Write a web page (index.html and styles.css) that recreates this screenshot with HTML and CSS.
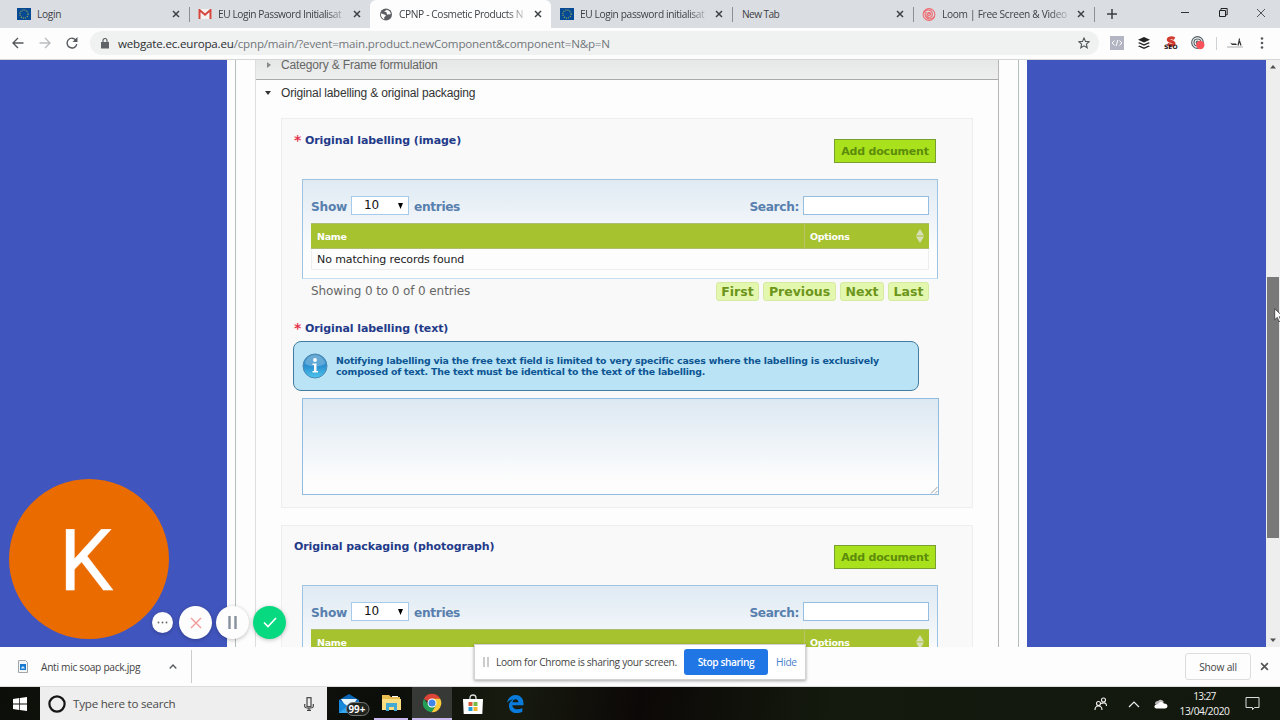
FILE: index.html
```html
<!DOCTYPE html>
<html lang="en">
<head>
<meta charset="utf-8">
<title>CPNP - Cosmetic Products Notification Portal</title>
<link rel="stylesheet" href="styles.css">
</head>
<body>
<svg class="defs" width="0" height="0">
  <defs>
    <symbol id="x" viewBox="0 0 8 8"><path d="M1 1l6 6M7 1l-6 6" fill="none" stroke="currentColor" stroke-width="1.5"/></symbol>
    <symbol id="eu" viewBox="0 0 14 12"><path fill="#064a94" d="M0 0h14v12H0z"/><circle cx="7" cy="6" r="4.1" fill="none" stroke="#b5b84c" stroke-width="1.1" stroke-dasharray="1 1.147"/></symbol>
    <symbol id="sort" viewBox="0 0 8 14"><path fill="#d7dfb9" d="M4 0l4 6.5H0zM0 7.5h8L4 14z"/></symbol>
    <linearGradient id="orb" x1="0" y1="0" x2="0" y2="1"><stop offset="0" stop-color="#4b94c7"/><stop offset=".5" stop-color="#2b8fcf"/><stop offset="1" stop-color="#4cc6ee"/></linearGradient>
  </defs>
</svg>

<header class="tabs">
  <div class="tab"><svg class="fav" width="14" height="12"><use href="#eu"/></svg><span class="tab-title">Login</span><svg class="close" width="8" height="8"><use href="#x"/></svg></div>
  <div class="tab flush"><svg class="fav" width="13" height="10" viewBox="0 0 13 10"><path fill="#f4f1f1" d="M0 0h13v10H0z"/><path d="M1 10V1l5.5 4.700L12 1v9" fill="none" stroke="#d5473d" stroke-width="2"/></svg><span class="tab-title fade t-gmail">EU Login Password Initialisat</span><svg class="close" width="8" height="8"><use href="#x"/></svg></div>
  <div class="tab active"><svg class="fav" width="13" height="13" viewBox="0 0 13 13"><circle cx="6.500" cy="6.500" r="6" fill="#5b5f63"/><path fill="#fff" d="M1.500 5.500c2 0 2.500 1 4 1.200s.5 1.800-.5 2.300.5 2-.5 2.200C2.500 10.500 1 8 1.500 5.500zM7 1.800c2 .2 4 1.700 4.300 4.200-1 .8-1.800 0-2.600.6S7 6 7.200 5 5 4.800 5 3.600s2-.6 2-1.800z"/></svg><span class="tab-title fade t-cpnp">CPNP - Cosmetic Products N</span><svg class="close" width="8" height="8"><use href="#x"/></svg></div>
  <div class="tab"><svg class="fav" width="14" height="12"><use href="#eu"/></svg><span class="tab-title fade t-eu">EU Login password initialisat</span><svg class="close" width="8" height="8"><use href="#x"/></svg></div>
  <div class="tab no-icon"><span class="tab-title">New Tab</span><svg class="close" width="8" height="8"><use href="#x"/></svg></div>
  <div class="tab"><svg class="fav" width="13" height="13" viewBox="0 0 13 13"><g fill="none" stroke="#ef6b70" stroke-width="1.100"><circle cx="6.500" cy="6.500" r="5.900"/><path d="M1 5c1-3 5-4 7.500-2S10 9 7.500 9.500 3.500 7 5 5.300 8.500 5 8.300 7M12 8c-1 3-5 4-7.500 2S2 5 4 4"/><circle cx="6.500" cy="6.500" r="1.200"/></g></svg><span class="tab-title fade t-loom">Loom | Free Screen &amp; Video</span><svg class="close" width="8" height="8"><use href="#x"/></svg></div>
  <svg class="plus" width="10" height="10" viewBox="0 0 10 10"><path d="M5 0v10M0 5h10" stroke="#3b3e41" stroke-width="1.500"/></svg>
  <div class="window-buttons">
    <svg width="10" height="10" viewBox="0 0 10 10"><path d="M1 4.500h8" stroke="#333"/></svg>
    <svg width="10" height="10" viewBox="0 0 10 10"><path d="M1.500 2.500h6v6h-6zM3 2.500v-2h6.200v6.300H8" fill="none" stroke="#222"/></svg>
    <svg width="10" height="10" viewBox="0 0 10 10"><path d="M1 1l8 8M9 1L1 9" stroke="#444" stroke-width=".9"/></svg>
  </div>
</header>

<nav class="toolbar">
  <svg class="nav-icon" width="12" height="12" viewBox="0 0 12 12"><path d="M11.500 6H1.500M6 1L1 6l5 5" fill="none" stroke="#55595d" stroke-width="1.400"/></svg>
  <svg class="nav-icon" width="12" height="12" viewBox="0 0 12 12"><path d="M.5 6h10M6 1l5 5-5 5" fill="none" stroke="#b9bcbf" stroke-width="1.400"/></svg>
  <svg class="nav-icon" width="12" height="12" viewBox="0 0 12 12"><path d="M10 3.200A4.900 4.900 0 1 0 10.800 7.200" fill="none" stroke="#55595d" stroke-width="1.400"/><path fill="#55595d" d="M11.500 0v5h-5z"/></svg>
  <div class="omnibox">
    <svg width="8" height="11" viewBox="0 0 8 11"><path fill="#5f6368" d="M0 4h8v6.500H0z"/><path d="M2 4V2.500a2 2 0 0 1 4 0V4" fill="none" stroke="#5f6368" stroke-width="1.200"/></svg>
    <span class="url"><b>webgate.ec.europa.eu</b>/cpnp/main/?event=main.product.newComponent&amp;component=N&amp;p=N</span>
    <svg class="star" width="12" height="12" viewBox="0 0 12 12"><path d="M6 1l1.500 3.400 3.700.3-2.800 2.500.8 3.600L6 8.900l-3.200 1.900.8-3.600L.8 4.700l3.700-.3z" fill="none" stroke="#54585c" stroke-width="1.100"/></svg>
  </div>
  <div class="extensions">
    <svg width="14" height="14" viewBox="0 0 14 14"><path fill="#b3b5c2" d="M0 0h14v14H0z"/><path d="M4.500 4.500L2.200 7l2.300 2.500M9.500 4.500L11.800 7 9.500 9.500M7.800 4L6.200 10" fill="none" stroke="#fff"/></svg>
    <svg width="14" height="14" viewBox="0 0 14 14"><path fill="#222" d="M7 1l6 2.800-6 2.800-6-2.800zM2.500 6.200L7 8.200l4.500-2 1.500.8-6 2.800L1 7zM2.500 9.400L7 11.400l4.500-2 1.500.8L7 13l-6-2.800z"/></svg>
    <svg width="14" height="14" viewBox="0 0 14 14"><path d="M10.500 2.800C8 1.200 4 1.700 4.300 3.800S10 5.200 10 7.500 6 9.500 3.500 8" fill="none" stroke="#d23c30" stroke-width="3"/><text x="0" y="13" class="seo">SEO</text></svg>
    <svg width="14" height="14" viewBox="0 0 14 14"><g fill="none" stroke="#566269" stroke-width="1.200"><circle cx="6.500" cy="6.500" r="5.800"/><circle cx="6.500" cy="6.500" r="3.500"/><circle cx="6.500" cy="6.500" r="1.300"/></g><circle cx="9.300" cy="9" r="4.200" fill="#f8525a"/></svg>
    <i class="divider"></i>
    <svg class="profile" width="16" height="12" viewBox="0 0 16 12"><path d="M3 5.500l2 1h4l1 1.500H5z" fill="#333"/><path d="M12.500 1.500l-.5 3-1 4M12.500 4l1.500 4.500" fill="none" stroke="#333" stroke-width="1.200"/><path d="M0 10h16" stroke="#999" stroke-width=".8"/></svg>
    <svg class="menu" width="4" height="12" viewBox="0 0 4 12"><g fill="#55595d"><circle cx="2" cy="1.500" r="1.300"/><circle cx="2" cy="6" r="1.300"/><circle cx="2" cy="10.500" r="1.300"/></g></svg>
  </div>
</nav>

<main class="viewport">
  <div class="page">
    <div class="frame">
      <div class="accordion">
        <h3 class="acc-head collapsed"><svg width="4" height="6" viewBox="0 0 4 6"><path d="M0 0l4 3-4 3z" fill="#888"/></svg><span>Category &amp; Frame formulation</span></h3>
        <h3 class="acc-head open"><svg width="6" height="4" viewBox="0 0 6 4"><path d="M0 0h6L3 4z" fill="#333"/></svg><span>Original labelling &amp; original packaging</span></h3>

        <section class="fieldset first">
          <div class="field-head"><h4><span class="req">*</span><span>Original labelling (image)</span></h4><button class="add">Add document</button></div>
          <div class="grid">
            <div class="grid-tools"><span class="show">Show</span><span class="select">10<svg width="5" height="6" viewBox="0 0 5 6"><path d="M0 0h5L2.500 6z"/></svg></span><span class="entries">entries</span><span class="search">Search:</span><span class="input"></span></div>
            <div class="thead"><span class="th-name">Name</span><span class="th-options">Options</span><svg width="8" height="14"><use href="#sort"/></svg></div>
            <div class="empty"><span>No matching records found</span></div>
          </div>
          <div class="pager"><span class="showing">Showing 0 to 0 of 0 entries</span><a class="p-first">First</a><a class="p-prev">Previous</a><a class="p-next">Next</a><a class="p-last">Last</a></div>
          <h4 class="text-label"><span class="req">*</span><span>Original labelling (text)</span></h4>
          <div class="info">
            <svg width="26" height="26" viewBox="0 0 26 26"><circle cx="13" cy="13" r="12" fill="url(#orb)" stroke="#4c89b4"/><path d="M3 11a10 9 0 0 1 20 0q-10 5-20 0z" fill="#fff" opacity=".22"/><circle cx="13" cy="7" r="1.900" fill="#fff"/><path d="M10.500 10.500h4V18H16v1.500h-5.500V18H12v-6h-1.500z" fill="#fff"/></svg>
            <p><span class="i1">Notifying labelling via the free text field is limited to very specific cases where the labelling is exclusively</span><br><span class="i2">composed of text. The text must be identical to the text of the labelling.</span></p>
          </div>
          <div class="textarea"><svg width="8" height="8" viewBox="0 0 8 8"><path d="M1 7.500L7.500 1M5 7.500L7.500 5" stroke="#888" stroke-width=".8"/></svg></div>
        </section>

        <section class="fieldset second">
          <div class="field-head"><h4><span>Original packaging (photograph)</span></h4><button class="add">Add document</button></div>
          <div class="grid">
            <div class="grid-tools"><span class="show">Show</span><span class="select">10<svg width="5" height="6" viewBox="0 0 5 6"><path d="M0 0h5L2.500 6z"/></svg></span><span class="entries">entries</span><span class="search">Search:</span><span class="input"></span></div>
            <div class="thead"><span class="th-name">Name</span><span class="th-options">Options</span><svg width="8" height="14"><use href="#sort"/></svg></div>
          </div>
        </section>
      </div>
    </div>
  </div>
  <div class="scrollbar">
    <svg width="6" height="4" viewBox="0 0 6 4"><path d="M0 3.500h6L3 0z" fill="#505050"/></svg>
    <div class="thumb"></div>
    <svg width="6" height="4" viewBox="0 0 6 4"><path d="M0 .5h6L3 4z" fill="#505050"/></svg>
  </div>
</main>

<div class="downloads">
  <svg class="file" width="10" height="13" viewBox="0 0 10 13"><path d="M.5.5h7l2 2v10h-9z" fill="#f3f6f8" stroke="#a2a6aa"/><path fill="#1779cf" d="M2 4h6v6H2z"/><path fill="#cfeaff" d="M3 8l2-2 2 2.500H3z"/></svg>
  <span class="filename">Anti mic soap pack.jpg</span>
  <svg class="caret" width="8" height="5" viewBox="0 0 8 5"><path d="M.7 4.500L4 1l3.300 3.500" fill="none" stroke="#55595d" stroke-width="1.300"/></svg>
  <span class="show-all"><span>Show all</span></span>
  <svg class="dl-close" width="9" height="9" viewBox="0 0 8 8"><use href="#x"/></svg>
</div>

<footer class="taskbar">
  <div class="start"><svg width="14" height="14" viewBox="0 0 14 14"><path fill="#fff" d="M0 2l6.300-.9v5.500H0zM7 1l7-1v6.600H7zM0 7.400h6.300v5.500L0 12zM7 7.400h7V14l-7-1z"/></svg></div>
  <div class="search-box">
    <svg width="18" height="18" viewBox="0 0 18 18"><circle cx="9" cy="9" r="7.600" fill="none" stroke="#151515" stroke-width="2.200"/></svg>
    <span>Type here to search</span>
    <svg class="mic" width="10" height="14" viewBox="0 0 10 14"><rect x="3" y=".7" width="4" height="9" fill="none" stroke="#444" stroke-width="1.200"/><path d="M.7 7v2.500Q1 11 3 11h4q2 0 2.300-1.500V7M5 11v2.500M3 13.300h4" fill="none" stroke="#444" stroke-width="1.200"/></svg>
  </div>
  <div class="app mail"><svg width="32" height="24" viewBox="0 0 32 24"><path fill="#0b66b6" d="M1 8l10-6 10 6v13H1z"/><path fill="#e7f5fd" d="M3 7h16l-5 8H8z"/><path fill="#1689dc" d="M1 8l10 7 10-7v13H1z"/><path fill="#35a5ec" d="M1 21l10-8 10 8z"/><rect x="8.500" y="10.500" width="22.500" height="13" rx="6.500" fill="#20241f" stroke="#777"/><text x="10.500" y="20.500" class="badge">99+</text></svg></div>
  <div class="app explorer"><svg width="19" height="17" viewBox="0 0 19 17"><path fill="#e8bd50" d="M0 1h7l2 2h9v4H0z"/><path fill="#fbdd84" d="M0 5h19v11H0z"/><path fill="#fff" d="M10 2h6v1h-6z"/><path fill="#43aad5" d="M4 9h11v8h-3v-4H7v4H4z"/></svg></div>
  <div class="app chrome"><svg width="20" height="20" viewBox="-10 -10 20 20"><path fill="#dc4437" d="M0 0L-8.200-4A9.200 9.200 0 0 1 8.200-4.200z"/><path fill="#f8cb3c" d="M0-4.300h8.200A9.200 9.200 0 0 1-.5 9.200L4 2z"/><path fill="#239e56" d="M-8.100-4.300A9.200 9.200 0 0 0-.5 9.200L4 2-3.800 2z"/><circle r="4.500" fill="#fff"/><circle r="3.500" fill="#4285e8"/></svg></div>
  <div class="app store"><svg width="20" height="20" viewBox="0 0 20 20"><path d="M7 6V4q0-3 3-3t3 3v2" fill="none" stroke="#ddd" stroke-width="1.300"/><path fill="#fff" d="M0 5h20l-.7 15H.7z"/><path fill="#dc5937" d="M5.500 8h4v4h-4z"/><path fill="#78b943" d="M10.500 8h4v4h-4z"/><path fill="#20a1dc" d="M5.500 13h4v4h-4z"/><path fill="#f1b52f" d="M10.500 13h4v4h-4z"/></svg></div>
  <div class="app edge"><svg width="17" height="18" viewBox="0 0 17 18"><path fill="#087bdc" d="M0 8C1 2.500 4.500 0 8.500 0 14 0 17 4 16.500 10.200H5.300c.2 4.300 6 5.300 10 2.800v3.700C8.500 20 1.500 17 2 10.200c.2-2.700 1.800-4.700 4.200-5.700C3 4.700 1 6.200 0 8zm5.500-.8h5.900C11.300 3.300 6 3.300 5.500 7.200z"/></svg></div>
  <div class="tray">
    <svg class="people" width="14" height="14" viewBox="0 0 14 14"><g fill="none" stroke="#f2f2f2" stroke-width="1.100"><circle cx="4.500" cy="6.500" r="2"/><path d="M1 13q0-4 3.500-4T8 13"/><circle cx="9.500" cy="3" r="2"/><path d="M7 6.500q5.500-2 5.500 2.500"/></g></svg>
    <svg class="up" width="12" height="8" viewBox="0 0 12 8"><path d="M1 7l5-5 5 5" fill="none" stroke="#eee" stroke-width="1.200"/></svg>
    <svg class="cloud" width="14" height="10" viewBox="0 0 14 10"><path fill="#bbb" d="M1 5q0-3 3-3Q7-1 10 3l-4 3z"/><path fill="#fff" d="M2.500 9.500Q0 9 .5 7T4 5q3-4 6-.5 3.500 0 3.500 3-.5 2-2.500 2z"/></svg>
    <div class="clock"><span class="time">13:27</span><span class="date">13/04/2020</span></div>
    <svg class="notify" width="15" height="15" viewBox="0 0 15 15"><path d="M1 1.500h13v10H9.500l-2 2.200v-2.200H1z" fill="none" stroke="#ddd"/></svg>
  </div>
</footer>

<div class="avatar"><span>K</span></div>
<div class="recorder">
  <span class="bubble small"><svg width="11" height="3" viewBox="0 0 11 3"><g fill="#666"><circle cx="1.500" cy="1.500" r=".9"/><circle cx="5.500" cy="1.500" r=".9"/><circle cx="9.500" cy="1.500" r=".9"/></g></svg></span>
  <span class="bubble"><svg width="12" height="12" viewBox="0 0 12 12"><path d="M1 1l10 10M11 1L1 11" stroke="#f19a99" stroke-width="1.400"/></svg></span>
  <span class="bubble"><svg width="9" height="13" viewBox="0 0 9 13"><path d="M1.500 0v13M7.500 0v13" stroke="#87909f" stroke-width="2.400"/></svg></span>
  <span class="bubble done"><svg width="14" height="11" viewBox="0 0 14 11"><path d="M1 5.500L5 9.500 13 1" fill="none" stroke="#fff" stroke-width="1.700"/></svg></span>
</div>
<div class="share"><i class="grip"></i><span class="share-text">Loom for Chrome is sharing your screen.</span><button class="stop"><span>Stop sharing</span></button><a class="hide">Hide</a></div>
<svg class="cursor" width="10" height="15" viewBox="0 0 10 15"><path d="M.7.700v11l2.600-2.300 1.800 4.200 2-.9-1.800-4h3.800z" fill="#fff" stroke="#333" stroke-width=".8"/></svg>
</body>
</html>
```
FILE: styles.css
```css
* { box-sizing: border-box; }
body { margin: 0; width: 1280px; height: 720px; overflow: hidden; position: relative; display: flex; flex-direction: column; font-family: "DejaVu Sans", sans-serif; background: #fdfdfd; }
svg { flex: none; display: block; }
span, a { white-space: nowrap; }
h3, h4, p { margin: 0; }
button { border: 0; padding: 0; font: inherit; }
.defs { position: absolute; }

.tabs { height: 28px; flex: none; background: #dadde2; display: flex; align-items: center; padding-left: 8px; color: #3f4246; font-family: "Open Sans", sans-serif; font-size: 10.200px; letter-spacing: -.3px; }
.tab { width: 181px; height: 28px; display: flex; align-items: center; padding: 0 9px; position: relative; }
.tab:not(.active)::after { content: ""; position: absolute; right: -1px; top: 7px; width: 1px; height: 15px; background: #8c9095; }
.tab.flush::after { display: none; }
.tab.active { background: #fdfdfd; border-radius: 6px 6px 0 0; }
.fav { width: 14px; margin-right: 6px; }
.tab-title { width: 128px; }
.fade { -webkit-mask-image: linear-gradient(90deg, #000 108px, rgba(0,0,0,.15) 127px); mask-image: linear-gradient(90deg, #000 108px, rgba(0,0,0,.15) 127px); }
.t-gmail { letter-spacing: -.43px; }
.t-cpnp { letter-spacing: -.37px; }
.t-eu { letter-spacing: -.38px; }
.t-loom { letter-spacing: -.32px; }
.no-icon .tab-title { width: 147px; margin-left: 1px; letter-spacing: -.6px; }
.close { margin-left: 7px; color: #3e4144; }
.plus { margin-left: 13px; }
.window-buttons { margin-left: auto; display: flex; gap: 28px; padding-right: 14px; margin-top: -3px; }

.toolbar { height: 32px; flex: none; background: #fdfdfd; border-bottom: 1px solid #d4d6d8; display: flex; align-items: center; padding: 0 16px 1px 12px; }
.nav-icon { margin-right: 15px; }
.nav-icon:nth-child(3) { margin-right: 12px; }
.omnibox { width: 1009px; height: 24px; border-radius: 12px; background: #f0f2f2; display: flex; align-items: center; padding: 0 9px 0 11px; }
.url { margin-left: 9px; font: 11.600px "Open Sans", sans-serif; color: #72767a; letter-spacing: -.2px; }
.url b { font-weight: 400; color: #2b2e31; }
.star { margin-left: auto; }
.extensions { display: flex; align-items: center; margin-left: 11px; gap: 13px; }
.seo { font: bold 6px "DejaVu Sans", sans-serif; fill: #221010; }
.divider { width: 1px; height: 13px; background: #cfd2d5; margin: 0 -3px 0 -2px; }
.profile { margin-right: 4px; }

.viewport { height: 587px; flex: none; display: flex; background: #4155be; overflow: hidden; padding-left: 227px; justify-content: space-between; }
.page { width: 800px; background: #fdfdfd; padding: 0 8px; }
.frame { width: 784px; height: 587px; border: solid #b4bebb; border-width: 0 1px; padding: 0 19px; }
.accordion { width: 744px; height: 587px; border: 1px solid #b5b5b5; border-left-color: #dedede; border-width: 0 1px; overflow: hidden; }
.acc-head { font: 12px "Liberation Sans", sans-serif; letter-spacing: -.15px; display: flex; align-items: center; }
.collapsed { height: 20px; background: linear-gradient(#e6e8e8, #eeeeee); border-bottom: 1px solid #aaa; color: #666; padding: 0 0 10px 11px; }
.acc-head span { margin-left: 10px; }
.open { height: 27px; color: #333; padding: 0 0 1px 9px; }
.fieldset { width: 692px; margin-left: 25px; background: #f9f9f9; border: 1px solid #eee; }
.first { height: 390px; margin-top: 11px; }
.second { height: 160px; margin-top: 17px; }
.field-head { height: 60px; display: flex; justify-content: space-between; padding: 20px 36px 0 12px; }
.second .field-head { height: 59px; padding-top: 19px; }
h4 { font-size: 11px; line-height: 15px; letter-spacing: -.09px; color: #233a89; display: flex; height: 15px; }
.field-head h4 { margin-top: -6px; }
.req { width: 11px; color: #e8364f; font-size: 14px; line-height: 15px; font-weight: bold; margin-left: 0; }
.add { width: 102px; height: 24px; background: #aae11d; border: 1px solid #789f32; color: #5c8c0b; font-weight: bold; font-size: 11px; letter-spacing: -.18px; text-align: center; }
.grid { width: 636px; height: 100px; margin-left: 20px; border: 1px solid #9ec2e2; border-bottom-color: #c7def0; background: linear-gradient(#dfeaf3, #fdfdfd 75%); padding: 16px 8px 0; }
.grid-tools { height: 19px; display: flex; align-items: center; color: #587fae; font-size: 12.200px; letter-spacing: -.35px; font-weight: bold; margin-bottom: 8px; }
.show, .entries, .search { padding-top: 2px; }
.show { width: 40px; letter-spacing: -.25px; }
.select { width: 58px; height: 19px; border: 1px solid #a6cbea; background: #fff; color: #111; font-weight: 400; font-size: 12px; letter-spacing: -.1px; line-height: 19px; display: flex; align-items: center; padding-left: 12px; }
.select svg { margin-left: auto; margin-right: 5px; }
.entries { margin-left: 5px; }
.search { margin-left: auto; }
.input { width: 126px; height: 19px; border: 1px solid #94bddf; background: #fff; margin-left: 4px; }
.thead { height: 26px; background: #a7c22f; color: #fff; display: flex; align-items: center; font-size: 9.500px; letter-spacing: -.28px; font-weight: bold; border: 1px solid #aebd70; border-width: 1px 0; padding-right: 5px; }
.th-name { width: 493px; padding-left: 6px; }
.th-options { flex: 1; border-left: 1px solid #b9c468; height: 24px; line-height: 25px; padding-left: 5px; }
.empty { height: 21px; border: 1px solid #eee; border-top: 0; background: #fdfdfd; color: #222; font-size: 11px; letter-spacing: -.1px; line-height: 22px; padding-left: 5px; }
.pager { height: 23px; display: flex; align-items: center; padding: 2px 43px 0 29px; gap: 4px; }
.showing { margin-right: auto; color: #666; font-size: 12px; letter-spacing: -.1px; padding-bottom: 2px; }
.pager a { height: 19px; line-height: 17px; border: 1px solid #d5eba1; border-radius: 3px; background: #e4f7ae; color: #6c951b; font-size: 12.500px; font-weight: bold; text-align: center; }
.p-first { width: 43px; } .p-prev { width: 73px; } .p-next { width: 44px; } .p-last { width: 41px; }
.text-label { margin: 25px 0 5px 12px; margin-top: 19px; }
.info { width: 626px; height: 50px; margin-left: 11px; margin-bottom: 7px; border: 1px solid #417da0; border-radius: 8px; background: #bae3f5; display: flex; align-items: center; padding-left: 8px; color: #0d5593; }
.info p { margin-left: 8px; font-size: 9.400px; line-height: 11px; font-weight: bold; }
.i1 { letter-spacing: -.17px; }
.i2 { letter-spacing: -.21px; }
.textarea { width: 637px; height: 97px; margin-left: 20px; border: 1px solid #8fbce0; background: linear-gradient(#dce8f2, #fdfdfd 85%); display: flex; align-items: flex-end; justify-content: flex-end; }

.scrollbar { width: 14px; background: #eee; display: flex; flex-direction: column; align-items: center; padding: 5px 0; }
.thumb { width: 12px; height: 261px; background: #797979; margin: 208px 0 auto; }

.downloads { height: 40px; flex: none; background: #fdfdfd; border-bottom: 1px solid #ddd; display: flex; align-items: center; padding: 0 11px 0 18px; font: 10.200px "Open Sans", sans-serif; letter-spacing: -.3px; color: #444; }
.filename { width: 128px; margin-left: 13px; }
.caret { box-sizing: content-box; padding: 14px 14px 14px 0; border-right: 1px solid #ccc; }
.caret + .show-all { margin-left: auto; }
.show-all { width: 66px; height: 27px; border: 1px solid #ddd; border-radius: 3px; display: grid; place-items: center; letter-spacing: -.2px; }
.dl-close { margin-left: 9px; color: #555; }

.taskbar { height: 33px; flex: none; background: linear-gradient(100deg, #0c0e09, #15180e 15%, #0b0e09 30%, #171b0f 40%, #0c0807 50%, #141a0e 65%, #12180d); display: flex; color: #f2f2f2; font-family: "Open Sans", sans-serif; }
.start { width: 40px; display: grid; place-items: center; }
.search-box { width: 287px; background: #eee; display: flex; align-items: center; padding: 0 13px 0 8px; color: #4a4a4a; font-size: 11.600px; letter-spacing: -.22px; }
.search-box span { margin-left: 7px; }
.mic { margin-left: auto; }
.app { display: grid; place-items: center; height: 33px; }
.mail { width: 47px; padding-left: 6px; }
.explorer { width: 34px; border-bottom: 2px solid #c9b9ef; }
.chrome { width: 40px; margin-left: 4px; background: #373936; border-bottom: 2px solid #c9b9ef; }
.store { width: 42px; }
.edge { width: 42px; }
.badge { font: bold 9.800px "Open Sans", sans-serif; fill: #fff; }
.tray { margin-left: auto; display: flex; align-items: center; padding-right: 20px; }
.up { margin-left: 20px; }
.cloud { margin-left: 14px; }
.clock { width: 58px; margin-left: 8px; display: flex; flex-direction: column; align-items: center; font-size: 10.200px; letter-spacing: -.4px; line-height: 15px; padding-right: 1px; }
.time { letter-spacing: -.7px; }
.notify { margin-left: 11px; }

.avatar { position: absolute; left: 9px; top: 479px; width: 160px; height: 160px; border-radius: 50%; background: #ea6b00; color: #fff; display: grid; place-items: center; padding: 4px 6px 0 0; font: 86px/100px Roboto, sans-serif; -webkit-text-stroke: .4px #fff; }
.recorder { position: absolute; left: 152px; top: 606px; display: flex; align-items: center; gap: 4px; }
.bubble { width: 33px; height: 33px; border-radius: 50%; background: #fdfdfd; display: grid; place-items: center; box-shadow: 0 1px 4px rgba(0,0,0,.25); }
.small { width: 21px; height: 21px; margin-right: 2px; }
.done { background: #07d981; }
.share { position: absolute; left: 474px; top: 644px; width: 332px; height: 36px; background: #fff; border: 1px solid #d2d2d2; box-shadow: 0 1px 3px rgba(0,0,0,.35); display: flex; align-items: center; font: 10.200px "Open Sans", sans-serif; letter-spacing: -.32px; color: #444; }
.grip { width: 6px; height: 10px; border: solid #ccc; border-width: 0 2px; margin-left: 8px; }
.share-text { width: 179px; margin: 0 9px 0 7px; }
.stop { width: 84px; height: 26px; border-radius: 3px; background: #2176e5; color: #fff; font-weight: 600; letter-spacing: -.4px; }
.hide { margin-left: 8px; color: #4b7fca; }
.cursor { position: absolute; left: 1274px; top: 308px; }
```
